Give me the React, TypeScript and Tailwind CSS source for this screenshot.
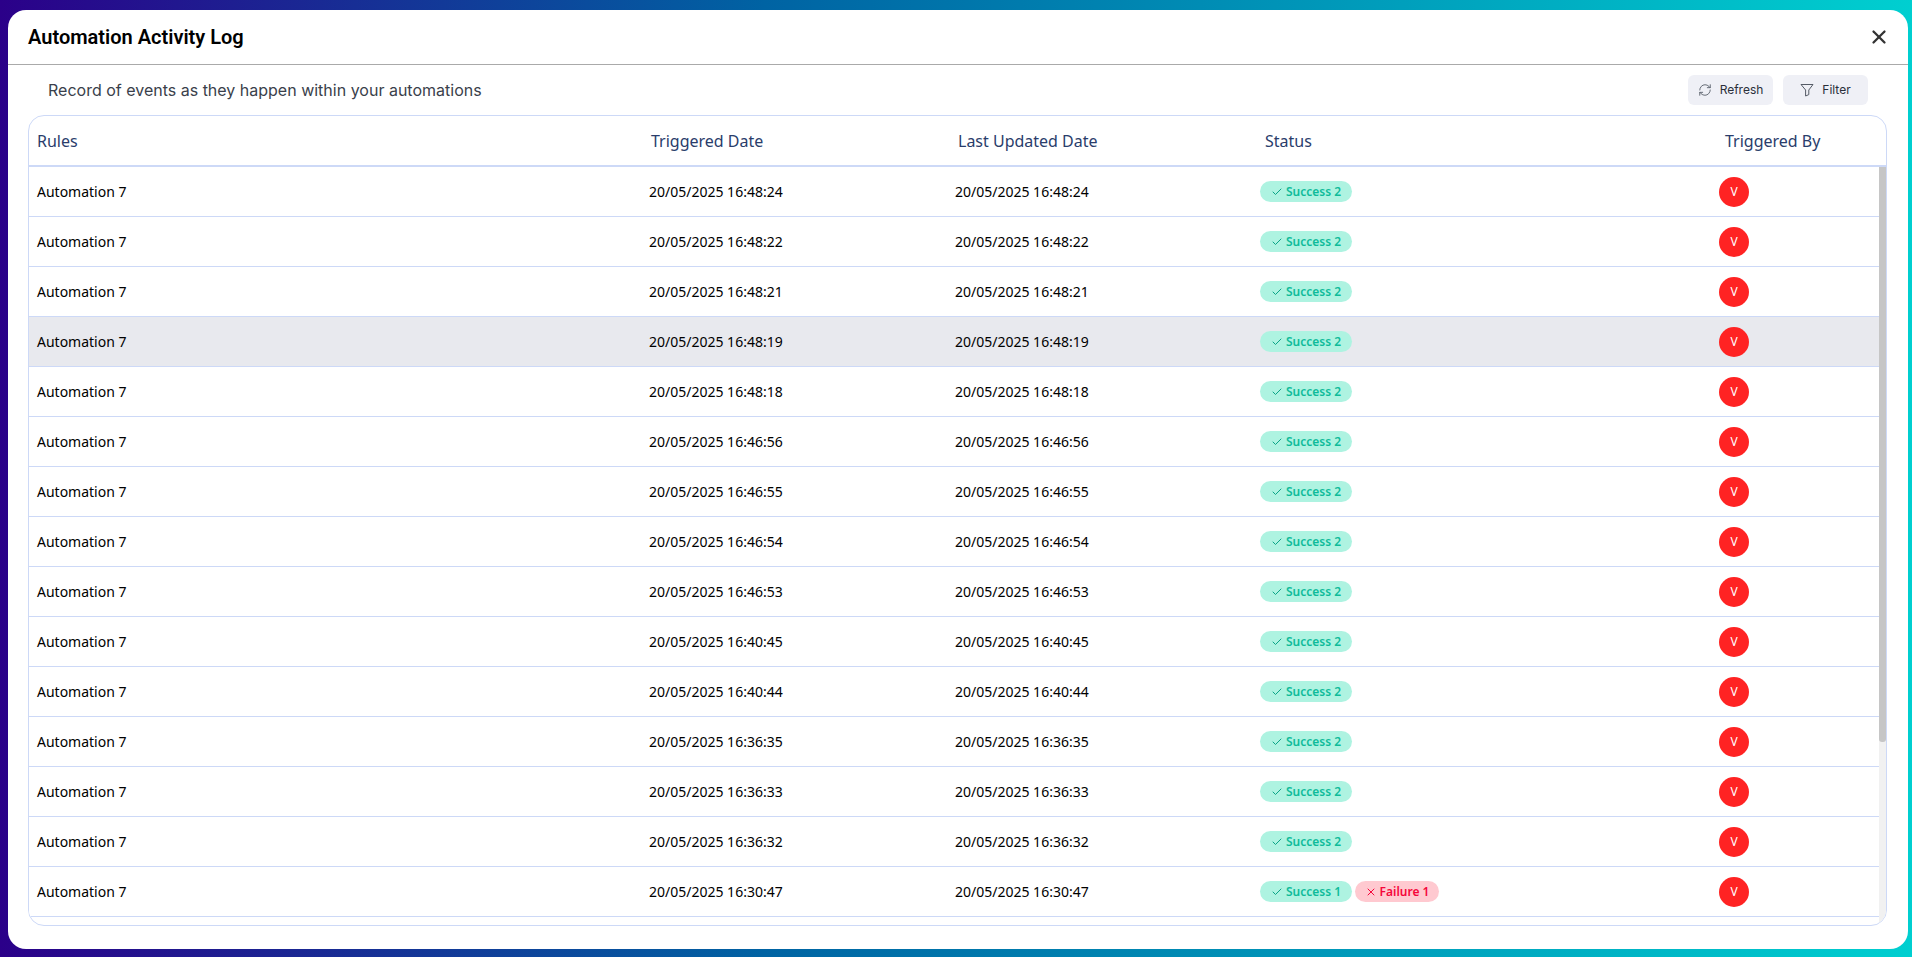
import { Check, RefreshCw, X } from 'lucide-react';

const TIMES = [
  '16:48:24', '16:48:22', '16:48:21', '16:48:19', '16:48:18',
  '16:46:56', '16:46:55', '16:46:54', '16:46:53', '16:40:45',
  '16:40:44', '16:36:35', '16:36:33', '16:36:32', '16:30:47',
];

const HEADERS = ['Rules', 'Triggered Date', 'Last Updated Date', 'Status', 'Triggered By'];

function FunnelIcon() {
  return (
    <svg viewBox="0 0 14 14" className="h-[14px] w-[14px] text-[#555b66]" fill="none" stroke="currentColor" strokeWidth={1} strokeLinejoin="round">
      <path d="M1 1.5h12L8.8 7v4.6L5.6 13V7L1 1.5z" />
    </svg>
  );
}

function SuccessBadge({ count }: { count: number }) {
  return (
    <span className="flex h-[21px] w-[92px] items-center justify-center gap-[3px] rounded-full bg-[#aef3e1] text-xs font-semibold text-[#0fbb9a]">
      <Check className="h-3 w-3 text-[#0aa587]" strokeWidth={2} />
      Success {count}
    </span>
  );
}

function FailureBadge({ count }: { count: number }) {
  return (
    <span className="flex h-[21px] w-[84px] items-center justify-center gap-[3px] rounded-full bg-[#ffc9d0] text-xs font-semibold text-[#f5063a]">
      <X className="h-3 w-3" strokeWidth={2} />
      Failure {count}
    </span>
  );
}

function Row({ time, index }: { time: string; index: number }) {
  const date = `20/05/2025 ${time}`;
  return (
    <div
      className={`grid h-[50px] shrink-0 grid-cols-[620px_306px_305px_459px_1fr] items-center border-b border-[#cdd9f7] text-sm text-black ${
        index === 3 ? 'bg-[#e8e9ee]' : 'bg-white'
      }`}
    >
      <div className="pl-2">Automation 7</div>
      <div>{date}</div>
      <div>{date}</div>
      <div className="flex items-center gap-[3px]">
        {index === 14 ? (
          <>
            <SuccessBadge count={1} />
            <FailureBadge count={1} />
          </>
        ) : (
          <SuccessBadge count={2} />
        )}
      </div>
      <div>
        <span className="flex h-[30px] w-[30px] items-center justify-center rounded-full bg-[#ff2323] text-xs text-white">V</span>
      </div>
    </div>
  );
}

export default function App() {
  return (
    <div className="flex h-[957px] w-full overflow-hidden bg-[linear-gradient(to_right,#2b0089_0%,#0063a3_40%,#00cfd0_100%)] pt-[10px] pr-1 pb-2 pl-2 font-['Noto_Sans',sans-serif]">
      <div className="flex min-w-0 flex-1 flex-col rounded-[18px] bg-white">
        {/* Header */}
        <div className="flex h-[55px] shrink-0 items-center justify-between border-b border-[#aaaaaa] pr-[18px] pl-5">
          <h1 className="font-['Roboto',sans-serif] text-xl font-semibold text-black">Automation Activity Log</h1>
          <X className="h-[22px] w-[22px] text-[#333333]" strokeWidth={2.5} />
        </div>

        {/* Toolbar */}
        <div className="flex h-[50px] shrink-0 items-center justify-between pr-10 pl-10">
          <p className="font-['Inter',sans-serif] text-base text-[#3a3f4b]">Record of events as they happen within your automations</p>
          <div className="flex gap-[10px] font-['Inter',sans-serif] text-xs text-[#2a2f3a]">
            <button className="flex h-[30px] w-[85px] items-center justify-center gap-2 rounded-md bg-[#eff0f6]">
              <RefreshCw className="h-[14px] w-[14px] text-[#555b66]" strokeWidth={1.5} />
              Refresh
            </button>
            <button className="flex h-[30px] w-[85px] items-center justify-center gap-2 rounded-md bg-[#eff0f6]">
              <FunnelIcon />
              Filter
            </button>
          </div>
        </div>

        {/* Table */}
        <div className="mr-[21px] mb-[23px] ml-5 flex min-h-0 flex-1 flex-col overflow-hidden rounded-2xl border border-[#cdd9f7]">
          <div className="grid h-[51px] shrink-0 grid-cols-[622px_307px_307px_460px_1fr] items-center border-b-2 border-[#cdd9f7] text-base text-[#2a3d6b]">
            {HEADERS.map((h, i) => (
              <div key={h} className={i === 0 ? 'pl-2' : ''}>{h}</div>
            ))}
          </div>
          <div className="flex min-h-0 flex-1">
            <div className="flex min-w-0 flex-1 flex-col">
              {TIMES.map((t, i) => (
                <Row key={t} time={t} index={i} />
              ))}
            </div>
            {/* scrollbar */}
            <div className="w-[7px] shrink-0 bg-[#f1f1f1]">
              <div className="h-[575px] rounded-b-[3px] bg-[#c6c6c6]" />
            </div>
          </div>
        </div>
      </div>
    </div>
  );
}
